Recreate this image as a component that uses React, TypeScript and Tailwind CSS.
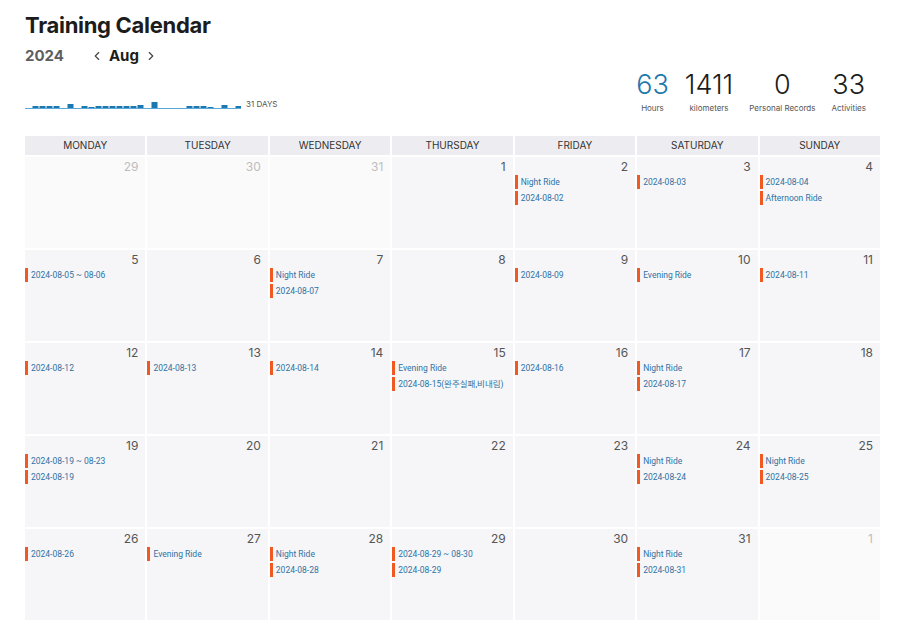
import { ChevronLeft, ChevronRight } from "lucide-react";

type Day = { n: number; out?: boolean; events: string[] };

const weeks: Day[][] = [
  [
    { n: 29, out: true, events: [] },
    { n: 30, out: true, events: [] },
    { n: 31, out: true, events: [] },
    { n: 1, events: [] },
    { n: 2, events: ["Night Ride", "2024-08-02"] },
    { n: 3, events: ["2024-08-03"] },
    { n: 4, events: ["2024-08-04", "Afternoon Ride"] },
  ],
  [
    { n: 5, events: ["2024-08-05 ~ 08-06"] },
    { n: 6, events: [] },
    { n: 7, events: ["Night Ride", "2024-08-07"] },
    { n: 8, events: [] },
    { n: 9, events: ["2024-08-09"] },
    { n: 10, events: ["Evening Ride"] },
    { n: 11, events: ["2024-08-11"] },
  ],
  [
    { n: 12, events: ["2024-08-12"] },
    { n: 13, events: ["2024-08-13"] },
    { n: 14, events: ["2024-08-14"] },
    { n: 15, events: ["Evening Ride", "2024-08-15(완주실패,비내림)"] },
    { n: 16, events: ["2024-08-16"] },
    { n: 17, events: ["Night Ride", "2024-08-17"] },
    { n: 18, events: [] },
  ],
  [
    { n: 19, events: ["2024-08-19 ~ 08-23", "2024-08-19"] },
    { n: 20, events: [] },
    { n: 21, events: [] },
    { n: 22, events: [] },
    { n: 23, events: [] },
    { n: 24, events: ["Night Ride", "2024-08-24"] },
    { n: 25, events: ["Night Ride", "2024-08-25"] },
  ],
  [
    { n: 26, events: ["2024-08-26"] },
    { n: 27, events: ["Evening Ride"] },
    { n: 28, events: ["Night Ride", "2024-08-28"] },
    { n: 29, events: ["2024-08-29 ~ 08-30", "2024-08-29"] },
    { n: 30, events: [] },
    { n: 31, events: ["Night Ride", "2024-08-31"] },
    { n: 1, out: true, events: [] },
  ],
];

const dayNames = ["MONDAY", "TUESDAY", "WEDNESDAY", "THURSDAY", "FRIDAY", "SATURDAY", "SUNDAY"];

// bar height per day of August (px)
const spark = [0, 2, 2, 2, 2, 0, 4, 0, 2, 1, 2, 2, 2, 2, 2, 2, 3, 0, 6, 0, 0, 0, 0, 2, 2, 2, 1, 0, 3, 0, 2];

const stats = [
  { value: "63", label: "Hours", blue: true },
  { value: "1411", label: "kilometers" },
  { value: "0", label: "Personal Records" },
  { value: "33", label: "Activities" },
];

const Sparkline = () => (
  <div className="flex items-end gap-[5px]">
    <svg width="216" height="10" viewBox="0 0 216 10">
      <line x1="0" y1="9.5" x2="216" y2="9.5" stroke="#5aa8d8" strokeWidth="1" />
      {spark.map((h, i) =>
        h > 0 ? (
          <rect key={i} x={i * 7 + 0.5} y={9 - h} width={6} height={h} fill="#1c78b0" />
        ) : null
      )}
    </svg>
    <span className="text-[8px] leading-[10px] text-[#555]">31 DAYS</span>
  </div>
);

const App = () => {
  return (
    <div
      className="w-[900px] bg-white pl-[25px] pr-[20px] pt-[8px] pb-[12px] text-[#222]"
      style={{ fontFamily: "Inter, 'Noto Sans CJK KR', sans-serif" }}
    >
      <div className="flex items-end justify-between">
        <div className="flex flex-col">
          <h1 className="text-[22px] leading-[34px] font-bold tracking-[-0.3px] text-[#1c1c1c]">
            Training Calendar
          </h1>
          <div className="mt-[3px] flex items-center h-[22px]">
            <span className="text-[15px] font-bold text-[#5e5e5e]">2024</span>
            <div className="ml-[26px] flex items-center gap-[5px]">
              <ChevronLeft size={14} strokeWidth={2} className="text-[#444]" />
              <span className="text-[15px] font-bold text-[#1c1c1c]">Aug</span>
              <ChevronRight size={14} strokeWidth={2} className="text-[#444]" />
            </div>
          </div>
          <div className="mt-[32px]">
            <Sparkline />
          </div>
        </div>
        <div className="flex items-end gap-[16px] pr-[14px] mb-[-6px]">
          {stats.map((s) => (
            <div key={s.label} className="flex flex-col items-center">
              <span
                className={`text-[27px] leading-[32px] font-light ${s.blue ? "text-[#1d78ad]" : "text-[#1c1c1c]"}`}
              >
                {s.value}
              </span>
              <span className="text-[8px] leading-[14px] text-[#555]">{s.label}</span>
            </div>
          ))}
        </div>
      </div>

      <div className="mt-[27px] grid grid-cols-7 gap-[2px] w-[855px]">
        {dayNames.map((d) => (
          <div
            key={d}
            className="h-[19px] bg-[#ededf1] flex items-center justify-center text-[10px] text-[#333]"
          >
            {d}
          </div>
        ))}
        {weeks.flat().map((day, i) => (
          <div
            key={i}
            className={`h-[91px] flex flex-col ${day.out ? "bg-[#fafafa]" : "bg-[#f6f6f8]"}`}
          >
            <div
              className={`text-right pr-[7px] pt-[3px] text-[12px] leading-[14px] ${day.out ? "text-[#bdbdbd]" : "text-[#555]"}`}
            >
              {day.n}
            </div>
            <div className="mt-[1px] flex flex-col gap-[2px]">
              {day.events.map((e) => (
                <div
                  key={e}
                  className="h-[14px] border-l-[3px] border-[#f05a22] pl-[3px] flex items-center text-[8.5px] text-[#2f72a4] whitespace-nowrap overflow-hidden"
                  style={{ fontFamily: "Roboto, 'Noto Sans CJK KR', sans-serif" }}
                >
                  {e}
                </div>
              ))}
            </div>
          </div>
        ))}
      </div>
    </div>
  );
};

export default App;
